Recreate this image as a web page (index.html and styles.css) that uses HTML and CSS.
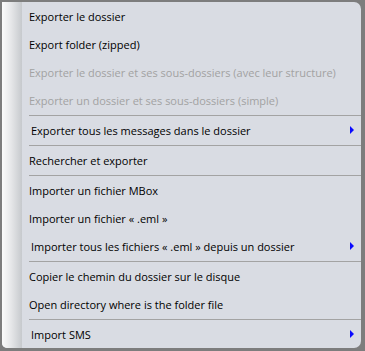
FILE: index.html
```html
<!DOCTYPE html>
<html>
<head>
<meta charset="utf-8">
<link rel="stylesheet" href="styles.css">
</head>
<body>
<div class="menu">
  <div class="gutter"></div>
  <ul class="items">
    <li class="item">Exporter le dossier</li>
    <li class="item">Export folder (zipped)</li>
    <li class="item disabled">Exporter le dossier et ses sous-dossiers (avec leur structure)</li>
    <li class="item disabled">Exporter un dossier et ses sous-dossiers (simple)</li>
    <li class="sep"></li>
    <li class="item sub"><span>Exporter tous les messages dans le dossier</span><i class="arrow"></i></li>
    <li class="sep"></li>
    <li class="item">Rechercher et exporter</li>
    <li class="sep"></li>
    <li class="item">Importer un fichier MBox</li>
    <li class="item">Importer un fichier « .eml »</li>
    <li class="item sub"><span>Importer tous les fichiers « .eml » depuis un dossier</span><i class="arrow"></i></li>
    <li class="sep"></li>
    <li class="item">Copier le chemin du dossier sur le disque</li>
    <li class="item">Open directory where is the folder file</li>
    <li class="sep"></li>
    <li class="item sub"><span>Import SMS</span><i class="arrow"></i></li>
  </ul>
</div>
</body>
</html>
```
FILE: styles.css
```css
html, body {
  margin: 0;
  padding: 0;
  background: #7d7d7d;
  width: 365px;
  height: 351px;
  overflow: hidden;
}
body {
  font-family: "Open Sans", "Noto Sans", sans-serif;
  font-size: 11px;
  color: #000;
  padding: 2px 4px 3px 2px;
  box-sizing: border-box;
}
.menu {
  display: flex;
  height: 346px;
  background: #d9dce3;
  border-radius: 0 7px 7px 5px;
  overflow: hidden;
}
.gutter {
  width: 20px;
  flex: none;
  background: linear-gradient(to right, #fbfbfb, #e6e7e9 45%, #c6c9cd);
}
.items {
  list-style: none;
  margin: 0;
  padding: 0;
  flex: 1;
}
.item {
  height: 28px;
  display: flex;
  align-items: center;
  justify-content: space-between;
  padding-left: 7px;
  white-space: nowrap;
}
.item.sub {
  padding-left: 9px;
}
.disabled {
  color: #a2a2a2;
}
.sep {
  height: 1px;
  margin-top: 1px;
  margin-left: 7px;
  background: #a3a3a3;
}
.arrow {
  width: 0;
  height: 0;
  border-left: 4px solid #0a0aff;
  border-top: 4px solid transparent;
  border-bottom: 4px solid transparent;
  margin-right: 7px;
}
```
